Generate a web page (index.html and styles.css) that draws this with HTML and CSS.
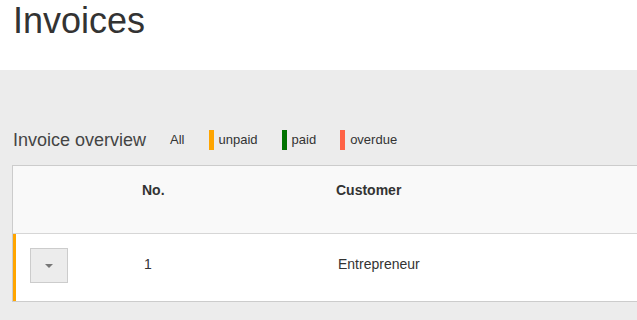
FILE: index.html
```html
<!DOCTYPE html>
<html lang="en">
<head>
<meta charset="utf-8">
<title>Invoices</title>
<link rel="stylesheet" href="styles.css">
</head>
<body>
<header class="page-header">
  <h1 class="page-title">Invoices</h1>
</header>
<main class="content">
  <div class="toolbar">
    <h2 class="overview-title">Invoice overview</h2>
    <ul class="filters">
      <li class="filter">All</li>
      <li class="filter"><span class="swatch swatch-unpaid"></span>unpaid</li>
      <li class="filter"><span class="swatch swatch-paid"></span>paid</li>
      <li class="filter"><span class="swatch swatch-overdue"></span>overdue</li>
    </ul>
  </div>
  <div class="table-card">
    <div class="table-row table-head">
      <div class="cell cell-toggle"></div>
      <div class="cell cell-no">No.</div>
      <div class="cell cell-customer">Customer</div>
    </div>
    <div class="table-row table-body-row status-unpaid">
      <div class="cell cell-toggle"><button class="dropdown-btn" type="button"><span class="caret"></span></button></div>
      <div class="cell cell-no">1</div>
      <div class="cell cell-customer">Entrepreneur</div>
    </div>
  </div>
</main>
</body>
</html>
```

FILE: styles.css
```css
html, body {
  margin: 0;
  padding: 0;
}
body {
  font-family: "Liberation Sans", Arial, sans-serif;
  color: #333;
  background: #ececec;
  overflow: hidden;
}
.page-header {
  height: 70px;
  background: #fff;
  padding-left: 13px;
  box-sizing: border-box;
}
.page-title {
  margin: 0;
  padding-top: 1px;
  font-size: 36px;
  line-height: 40px;
  font-weight: normal;
  color: #333;
}
.content {
  background: #ececec;
  padding-top: 60px;
  padding-bottom: 20px;
}
.toolbar {
  display: flex;
  align-items: center;
  height: 20px;
  padding-left: 13px;
}
.overview-title {
  margin: 0 24px 0 0;
  font-size: 18px;
  font-weight: normal;
  line-height: 20px;
  color: #444;
}
.filters {
  display: flex;
  align-items: center;
  gap: 24px;
  list-style: none;
  margin: 0;
  padding: 0;
}
.filter {
  display: flex;
  align-items: center;
  gap: 5px;
  font-size: 13px;
  line-height: 20px;
  color: #333;
}
.swatch {
  display: block;
  width: 5px;
  height: 20px;
}
.swatch-unpaid { background: #ffa500; }
.swatch-paid { background: #007300; }
.swatch-overdue { background: #ff6347; }
.table-card {
  margin: 15px 0 0 12px;
  border: 1px solid #cccccc;
  border-right: none;
  background: #fff;
}
.table-row {
  display: grid;
  grid-template-columns: 125px 194px 1fr;
  box-sizing: border-box;
  height: 67px;
}
.table-head {
  background: #f9f9f9;
  border-bottom: 1px solid #d6d6d6;
  padding-left: 4px;
  padding-top: 14px;
  font-weight: bold;
  font-size: 14px;
  line-height: 20px;
  height: 68px;
}
.table-body-row {
  background: #fff;
  padding-top: 14px;
  font-size: 14px;
  line-height: 20px;
}
.status-unpaid {
  border-left: 3px solid #ffa500;
}
.table-body-row .cell-no,
.table-body-row .cell-customer {
  padding-top: 6px;
  padding-left: 3px;
}
.table-body-row .cell-customer {
  padding-left: 3px;
}
.cell-toggle {
  padding-left: 14px;
}
.dropdown-btn {
  display: flex;
  align-items: center;
  justify-content: center;
  width: 38px;
  height: 35px;
  box-sizing: border-box;
  background: #ececec;
  border: 1px solid #cccccc;
  border-radius: 0;
  padding: 0;
  margin: 0;
}
.caret {
  display: block;
  width: 0;
  height: 0;
  border-left: 4px solid transparent;
  border-right: 4px solid transparent;
  border-top: 4px solid #777;
}
```
